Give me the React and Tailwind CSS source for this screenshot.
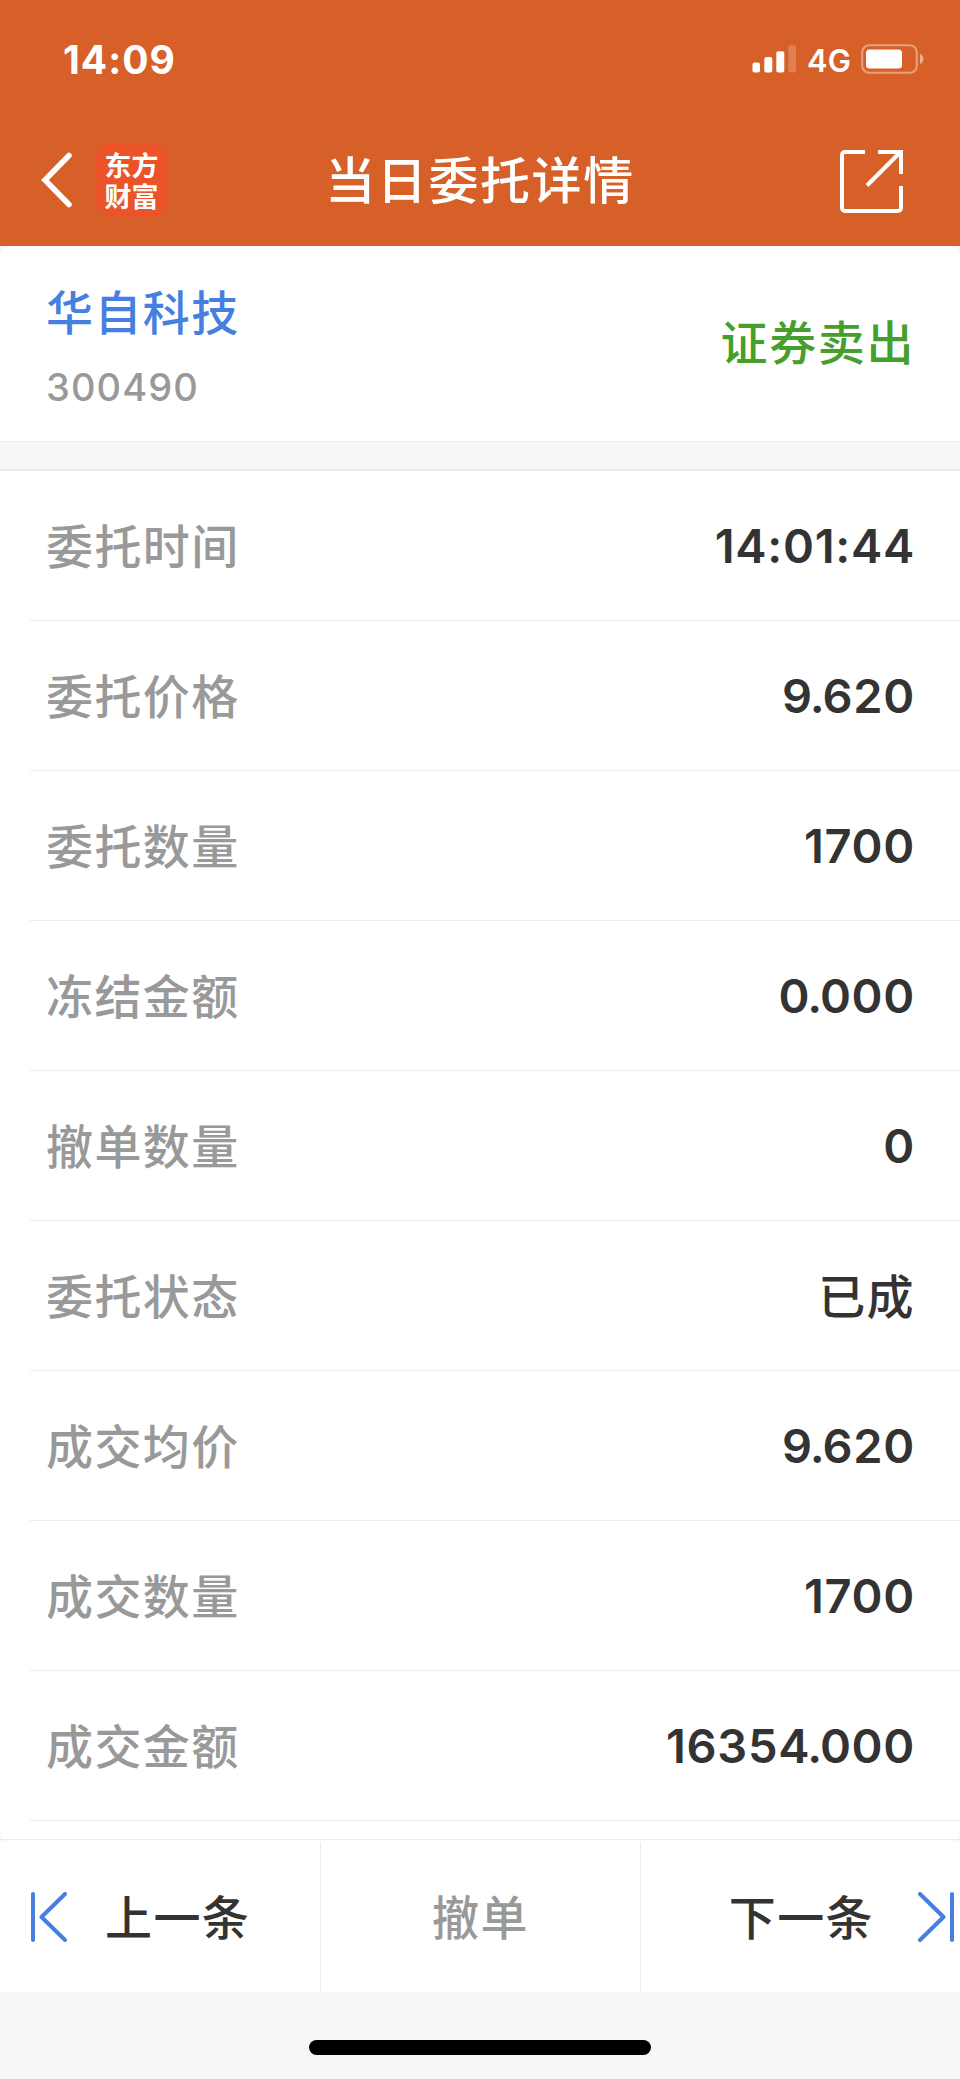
const rows = [
  { label: '委托时间', value: '14:01:44' },
  { label: '委托价格', value: '9.620' },
  { label: '委托数量', value: '1700' },
  { label: '冻结金额', value: '0.000' },
  { label: '撤单数量', value: '0' },
  { label: '委托状态', value: '已成', chinese: true },
  { label: '成交均价', value: '9.620' },
  { label: '成交数量', value: '1700' },
  { label: '成交金额', value: '16354.000' },
];

function SignalIcon() {
  return (
    <svg width="44" height="28" viewBox="0 0 44 28" fill="#fff">
      <rect x="0.5" y="17.5" width="7.5" height="10" rx="2" />
      <rect x="12.3" y="12" width="8" height="15.5" rx="2" />
      <rect x="24.3" y="6.2" width="8" height="21.3" rx="2" />
      <rect x="36.3" y="0.3" width="7.7" height="27.2" rx="2" opacity="0.2" />
    </svg>
  );
}

function BatteryIcon() {
  return (
    <svg width="63" height="30" viewBox="0 0 63 30" fill="none">
      <rect x="1.2" y="1.2" width="54.6" height="27.6" rx="7" stroke="#fff" strokeOpacity="0.4" strokeWidth="2" />
      <rect x="5" y="5.5" width="36" height="19" rx="3.5" fill="#fff" />
      <path d="M59 10c4.5 1.5 4.5 8.500 0 10z" fill="#fff" fillOpacity="0.5" />
    </svg>
  );
}

function BackIcon() {
  return (
    <svg width="32" height="56" viewBox="0 0 32 56" fill="none">
      <path d="M28 3.500L4 28L28 52.500" stroke="#fff" strokeWidth="5.5" strokeLinecap="round" />
    </svg>
  );
}

function ShareIcon() {
  return (
    <svg width="63" height="63" viewBox="0 0 63 63" fill="none" stroke="#fff" strokeWidth="4">
      <path d="M25 2H5a3 3 0 0 0-3 3V58a3 3 0 0 0 3 3H58a3 3 0 0 0 3-3V36" />
      <path d="M38 2H61V24" />
      <path d="M27 35.500L60 2.500" />
    </svg>
  );
}

function SkipIcon({ flip }) {
  return (
    <svg
      width="36"
      height="50"
      viewBox="0 0 36 50"
      fill="none"
      stroke="#467fdf"
      strokeWidth="4"
      strokeLinecap="round"
      strokeLinejoin="round"
      className={flip ? 'shrink-0 -scale-x-100' : 'shrink-0'}
    >
      <path d="M2 2V48" />
      <path d="M34 2L10.500 25L34 48" />
    </svg>
  );
}

function Header() {
  return (
    <header className="h-[246px] bg-[#d76028] text-white">
      <div className="flex h-[118px] items-center justify-between pl-[63px] pr-9">
        <span className="text-[39px] leading-none font-bold tracking-[1px]">14:09</span>
        <div className="flex items-center">
          <SignalIcon />
          <span className="ml-[11px] w-[54px] pt-[2px] text-[31px] leading-none font-semibold">4G</span>
          <BatteryIcon />
        </div>
      </div>
      <div className="grid h-[126px] grid-cols-[1fr_auto_1fr] items-center pr-[57px] pl-[41px]">
        <div className="flex items-center pb-[2px]">
          <BackIcon />
          <div className="ml-[22px] flex h-[74px] w-[73px] items-center justify-center rounded-[17px] bg-[#eb5428] font-['Noto_Sans_CJK_SC',sans-serif] text-[27px] leading-[31px] font-bold">
            <p className="w-[54px] break-all">东方财富</p>
          </div>
        </div>
        <h1 className="ml-4 text-[50px] leading-[60px] font-medium tracking-[1.6px]">当日委托详情</h1>
        <div className="flex justify-end">
          <ShareIcon />
        </div>
      </div>
    </header>
  );
}

function StockCard() {
  return (
    <section className="flex h-[196px] items-center justify-between rounded-t-[10px] border-b border-[#ececec] bg-white pr-[45px] pl-[46px]">
      <div className="pt-[10px]">
        <div className="text-[47px] leading-[60px] font-medium tracking-[1.4px] text-[#467fdf]">华自科技</div>
        <div className="mt-4 text-[38px] leading-[56px] font-medium tracking-[1.1px] text-[#999]">300490</div>
      </div>
      <div className="pb-[2px] text-[47px] leading-[60px] font-medium tracking-[1.6px] text-[#459f2b]">证券卖出</div>
    </section>
  );
}

function NumberValue({ value }) {
  const [whole, decimals] = value.split('.');

  return (
    <span className="text-[47px] leading-[60px] font-semibold tracking-[0.7px] text-[#333]">
      {whole}
      {decimals && <span className="-mx-[3px]">.</span>}
      {decimals}
    </span>
  );
}

function DetailRow({ label, value, chinese }) {
  return (
    <div className="ml-[30px] flex h-[150px] items-center justify-between border-b border-[#ececec] pr-[45px] pl-4">
      <span className="pt-[2px] text-[47px] leading-[60px] font-medium tracking-[1.4px] text-[#999]">{label}</span>
      {chinese ? (
        <span className="pt-[2px] text-[47px] leading-[60px] font-medium tracking-[1.4px] text-[#333]">{value}</span>
      ) : (
        <NumberValue value={value} />
      )}
    </div>
  );
}

function ActionBar() {
  return (
    <nav className="grid h-[150px] grid-cols-3 bg-white text-[47px] leading-[60px] font-medium tracking-[1.4px] text-[#333]">
      <button className="flex items-center pl-[31px]">
        <SkipIcon />
        <span className="ml-[38px] pt-[2px]">上一条</span>
      </button>
      <button className="border-l border-[#ececec] pt-[2px] text-[#999]">撤单</button>
      <button className="flex items-center justify-end border-l border-[#ececec] pr-[6px]">
        <span className="mr-11 pt-[2px]">下一条</span>
        <SkipIcon flip />
      </button>
    </nav>
  );
}

export default function App() {
  return (
    <div className="h-[2079px] w-[960px] overflow-hidden bg-[#f6f7f9] font-['Inter','Noto_Sans_CJK_SC',sans-serif]">
      <Header />
      <StockCard />
      <main className="mt-[27px] rounded-b-[10px] border-t-2 border-[#ececec] bg-white">
        {rows.map((row) => (
          <DetailRow key={row.label} {...row} />
        ))}
        <div className="h-[19px] border-b border-[#ececec]" />
        <div className="h-[2px]" />
      </main>
      <ActionBar />
      <div className="mx-auto mt-12 h-[15px] w-[342px] rounded-full bg-black" />
    </div>
  );
}
